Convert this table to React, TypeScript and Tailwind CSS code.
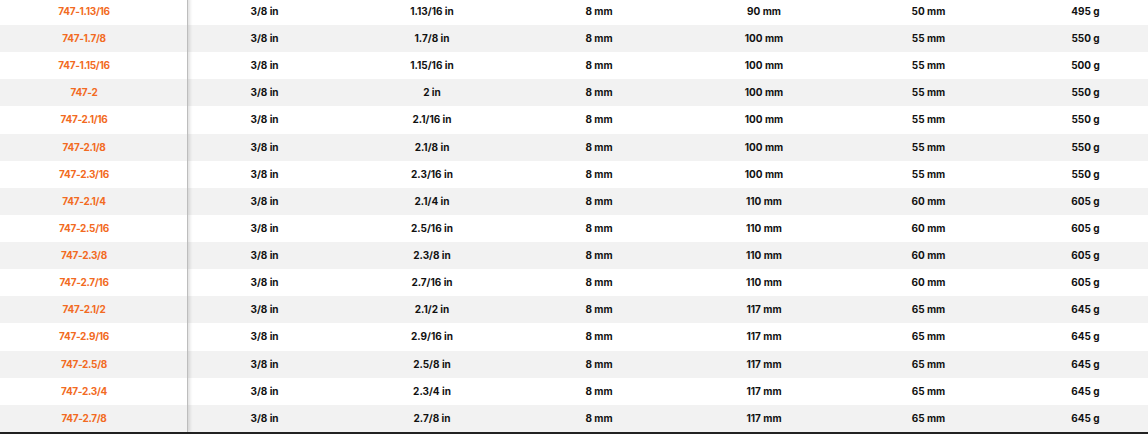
import React from "react";

const rows: string[][] = [
  ["747-1.13/16", "3/8 in", "1.13/16 in", "8 mm", "90 mm", "50 mm", "495 g"],
  ["747-1.7/8", "3/8 in", "1.7/8 in", "8 mm", "100 mm", "55 mm", "550 g"],
  ["747-1.15/16", "3/8 in", "1.15/16 in", "8 mm", "100 mm", "55 mm", "500 g"],
  ["747-2", "3/8 in", "2 in", "8 mm", "100 mm", "55 mm", "550 g"],
  ["747-2.1/16", "3/8 in", "2.1/16 in", "8 mm", "100 mm", "55 mm", "550 g"],
  ["747-2.1/8", "3/8 in", "2.1/8 in", "8 mm", "100 mm", "55 mm", "550 g"],
  ["747-2.3/16", "3/8 in", "2.3/16 in", "8 mm", "100 mm", "55 mm", "550 g"],
  ["747-2.1/4", "3/8 in", "2.1/4 in", "8 mm", "110 mm", "60 mm", "605 g"],
  ["747-2.5/16", "3/8 in", "2.5/16 in", "8 mm", "110 mm", "60 mm", "605 g"],
  ["747-2.3/8", "3/8 in", "2.3/8 in", "8 mm", "110 mm", "60 mm", "605 g"],
  ["747-2.7/16", "3/8 in", "2.7/16 in", "8 mm", "110 mm", "60 mm", "605 g"],
  ["747-2.1/2", "3/8 in", "2.1/2 in", "8 mm", "117 mm", "65 mm", "645 g"],
  ["747-2.9/16", "3/8 in", "2.9/16 in", "8 mm", "117 mm", "65 mm", "645 g"],
  ["747-2.5/8", "3/8 in", "2.5/8 in", "8 mm", "117 mm", "65 mm", "645 g"],
  ["747-2.3/4", "3/8 in", "2.3/4 in", "8 mm", "117 mm", "65 mm", "645 g"],
  ["747-2.7/8", "3/8 in", "2.7/8 in", "8 mm", "117 mm", "65 mm", "645 g"],
];

export default function App() {
  return (
    <div
      className="w-[1148px] h-[436px] overflow-hidden bg-white text-[10px] font-bold text-[#111]"
      style={{ fontFamily: "Inter, 'Open Sans', sans-serif" }}
    >
      <div className="-mt-[2.13px] flex border-b-2 border-[#222]">
        <div className="relative z-10 w-[188px] shrink-0 border-r border-[#bdbdbd] shadow-[2px_0_3px_rgba(0,0,0,0.12)]">
          {rows.map((r, i) => (
            <div
              key={i}
              className={`flex h-[27.133px] items-center justify-center pr-[19px] tracking-[-0.3px] text-[#f26a22] ${
                i % 2 === 1 ? "bg-[#f2f2f2]" : "bg-white"
              }`}
            >
              {r[0]}
            </div>
          ))}
        </div>
        <div className="flex-1">
          {rows.map((r, i) => (
            <div
              key={i}
              className={`grid h-[27.133px] grid-cols-[153px_182px_152px_178px_151px_1fr] items-center text-center ${
                i % 2 === 1 ? "bg-[#f2f2f2]" : "bg-white"
              }`}
            >
              <div>{r[1]}</div>
              <div>{r[2]}</div>
              <div>{r[3]}</div>
              <div>{r[4]}</div>
              <div>{r[5]}</div>
              <div className="pl-[19px]">{r[6]}</div>
            </div>
          ))}
        </div>
      </div>
    </div>
  );
}
